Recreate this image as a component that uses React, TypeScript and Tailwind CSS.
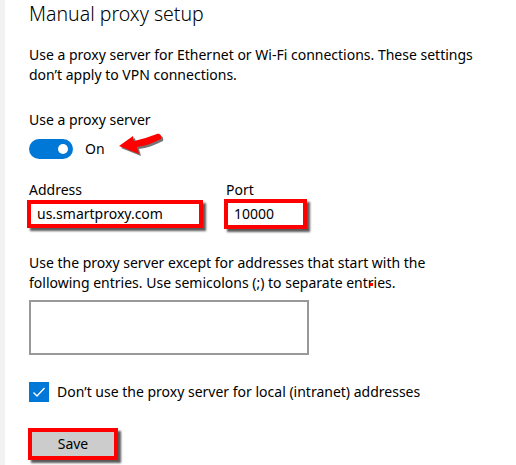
import React from "react";

function RedBox({ className, children }: { className?: string; children?: React.ReactNode }) {
  return (
    <div
      className={`border-4 border-[#ff0000] bg-white shadow-[3px_3px_2px_rgba(0,0,0,0.65)] ${className ?? ""}`}
    >
      {children}
    </div>
  );
}

const ARROW =
  "M1 14 L15 4 L16 9 C24 7 31 5 39 2 C42 1 44 4 43 7 C35 11 27 14 19 15 L21 22 Z";

export default function App() {
  return (
    <div
      className="flex w-[516px] h-[465px] overflow-hidden bg-white text-[#000] text-[14px] leading-[20px]"
      style={{ fontFamily: '"Noto Sans", "Open Sans", sans-serif' }}
    >
      <div className="w-[5px] shrink-0 bg-[#f2f2f2]" />
      <div className="flex flex-col pl-[24px]">
        <h1 className="text-[19.5px] leading-[28px] font-light text-[#000]">Manual proxy setup</h1>
        <p className="mt-[17px] w-[452px]">
          Use a proxy server for Ethernet or Wi-Fi connections. These settings don’t apply to VPN connections.
        </p>
        <div className="mt-[25px]">Use a proxy server</div>
        <div className="mt-[9px] flex items-center h-[20px]">
          <div className="w-[44px] h-[20px] rounded-full bg-[#0078d7] flex items-center justify-end pr-[5px]">
            <div className="w-[10px] h-[10px] rounded-full bg-white" />
          </div>
          <span className="ml-[12px]">On</span>
          <svg width="48" height="26" viewBox="0 0 48 26" className="ml-[13px] -mt-[9px]">
            <path d={ARROW} fill="#2a2a2a" opacity="0.65" transform="translate(2,2)" />
            <path d={ARROW} fill="#ff0000" />
          </svg>
        </div>
        <div className="mt-[21px] flex gap-[23px]">
          <div className="flex flex-col">
            <span>Address</span>
            <RedBox className="-ml-[2px] w-[176px] h-[28px] flex items-center pl-[6px]">
              <span>us.smartproxy.com</span>
            </RedBox>
          </div>
          <div className="flex flex-col">
            <span>Port</span>
            <RedBox className="-ml-[2px] w-[83px] h-[30px] -mt-[1px] flex items-center pl-[6px]">
              <span>10000</span>
            </RedBox>
          </div>
        </div>
        <p className="mt-[24px] w-[452px] relative">
          Use the proxy server except for addresses that start with the following entries. Use semicolons (;) to separate entries.
          <span className="absolute left-[341px] top-[30px] w-[3px] h-[3px] bg-[#ff0000]" />
        </p>
        <div className="mt-[7px] w-[280px] h-[55px] border-2 border-[#999999] bg-white" />
        <label className="mt-[27px] flex items-center gap-[8px]">
          <span className="w-[20px] h-[20px] bg-[#0078d7] flex items-center justify-center">
            <svg width="14" height="14" viewBox="0 0 14 14">
              <path d="M1.5 7.5 L5 11 L12.5 3" stroke="#ffffff" strokeWidth="1.4" fill="none" />
            </svg>
          </span>
          <span>Don’t use the proxy server for local (intranet) addresses</span>
        </label>
        <div className="mt-[26px]">
          <div className="-ml-[1px] w-[90px] h-[32px] border-4 border-[#ff0000] bg-[#cccccc] shadow-[3px_3px_2px_rgba(0,0,0,0.65)] flex items-center justify-center">
            Save
          </div>
        </div>
      </div>
    </div>
  );
}
